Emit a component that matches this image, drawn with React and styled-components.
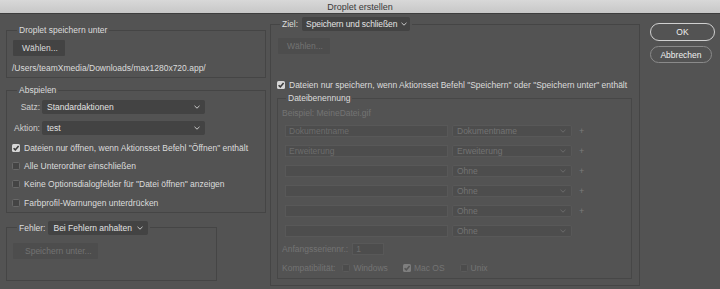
import React from 'react'
import styled, { createGlobalStyle } from 'styled-components'

const GlobalStyle = createGlobalStyle`
  html, body {
    margin: 0;
    padding: 0;
    background: #535353;
  }
  body {
    font-family: "Liberation Sans", Arial, sans-serif;
    font-size: 8.5px;
    color: #dcdcdc;
  }
  #root {
    width: 720px;
    height: 289px;
    overflow: hidden;
  }
`

function Chevron({ dim }) {
  return (
    <svg width="6" height="4" viewBox="0 0 6 4">
      <polyline points="0.5,0.8 3,3.2 5.5,0.8" fill="none" stroke={dim ? '#6a6a6a' : '#c8c8c8'} strokeWidth="1" />
    </svg>
  )
}

function Check({ checked, disabled }) {
  return (
    <Box checked={checked} disabled={disabled}>
      {checked && (
        <svg width="8" height="8" viewBox="0 0 8 8">
          <polyline points="1.6,4.2 3.3,5.9 6.6,2" fill="none" stroke={disabled ? '#555' : '#3a3a3a'} strokeWidth="1.6" />
        </svg>
      )}
    </Box>
  )
}

function CheckRow({ checked, disabled, children }) {
  return (
    <CheckLabel disabled={disabled}>
      <Check checked={checked} disabled={disabled} />
      {children}
    </CheckLabel>
  )
}

function Select({ value, width, disabled, tight }) {
  return (
    <SelectBox width={width} disabled={disabled} tight={tight}>
      <span>{value}</span>
      <Chevron dim={disabled} />
    </SelectBox>
  )
}

const naming = [
  ['Dokumentname', 'Dokumentname', true],
  ['Erweiterung', 'Erweiterung', true],
  ['', 'Ohne', true],
  ['', 'Ohne', true],
  ['', 'Ohne', true],
  ['', 'Ohne', false],
]

function App() {
  return (
    <Window>
      <GlobalStyle />
      <TitleBar>Droplet erstellen</TitleBar>
      <Body>
        <LeftColumn>
          <Group top={11} pad="5px 6px 4px 5px">
            <Legend offset={5}>Droplet speichern unter</Legend>
            <Button>Wählen...</Button>
            <Path>/Users/teamXmedia/Downloads/max1280x720.app/</Path>
          </Group>

          <Group top={7} pad="5px 6px 0 5px">
            <Legend offset={5}>Abspielen</Legend>
            <FormGrid>
              <FieldLabel>Satz:</FieldLabel>
              <Select value="Standardaktionen" width={163} />
              <FieldLabel>Aktion:</FieldLabel>
              <Select value="test" width={163} />
            </FormGrid>
            <CheckList>
              <CheckRow checked>Dateien nur öffnen, wenn Aktionsset Befehl "Öffnen" enthält</CheckRow>
              <CheckRow>Alle Unterordner einschließen</CheckRow>
              <CheckRow>Keine Optionsdialogfelder für "Datei öffnen" anzeigen</CheckRow>
              <CheckRow>Farbprofil-Warnungen unterdrücken</CheckRow>
            </CheckList>
          </Group>

          <Group top={8} pad="8px 6px 21px 5px" width={211}>
            <Legend tall offset={5}>
              <LegendRow gap={3}>
                Fehler:
                <Select value="Bei Fehlern anhalten" width={100} />
              </LegendRow>
            </Legend>
            <Button disabled wide>Speichern unter...</Button>
          </Group>
        </LeftColumn>

        <RightGroup>
          <Legend tall offset={3}>
            <LegendRow gap={4}>
              Ziel:
              <Select value="Speichern und schließen" width={108} tight />
            </LegendRow>
          </Legend>
          <Button disabled>Wählen...</Button>
          <SaveCheck>
            <CheckRow checked>Dateien nur speichern, wenn Aktionsset Befehl "Speichern" oder "Speichern unter" enthält</CheckRow>
          </SaveCheck>

          <InnerGroup>
            <Legend offset={4}>Dateibenennung</Legend>
            <Muted>Beispiel: MeineDatei.gif</Muted>
            <NameRows>
              {naming.map(([text, option, plus], i) => (
                <NameRow key={i}>
                  <TextField width={163}>{text}</TextField>
                  <Select value={option} width={120} disabled />
                  {plus && <Plus>+</Plus>}
                </NameRow>
              ))}
            </NameRows>
            <SerialRow>
              <Muted>Anfangsseriennr.:</Muted>
              <TextField width={32}>1</TextField>
            </SerialRow>
            <CompatRow>
              <Muted>Kompatibilität:</Muted>
              <CompatOptions>
                <CheckRow disabled>Windows</CheckRow>
                <CheckRow disabled checked>Mac OS</CheckRow>
                <CheckRow disabled>Unix</CheckRow>
              </CompatOptions>
            </CompatRow>
          </InnerGroup>
        </RightGroup>

        <Actions>
          <PillButton primary>OK</PillButton>
          <PillButton>Abbrechen</PillButton>
        </Actions>
      </Body>
    </Window>
  )
}

export default App

const Window = styled.div`
  width: 720px;
  height: 289px;
  display: flex;
  flex-direction: column;
  background: #535353;
`

const TitleBar = styled.div`
  height: 13px;
  flex-shrink: 0;
  display: flex;
  align-items: center;
  justify-content: center;
  font-size: 9px;
  color: #3a3a3a;
  background: linear-gradient(#d8d8d8, #c7c7c7);
  border-bottom: 1px solid #3d3d3d;
`

const Body = styled.div`
  display: flex;
  align-items: flex-start;
`

const LeftColumn = styled.div`
  width: 260px;
  margin-left: 6px;
  display: flex;
  flex-direction: column;
`

const Group = styled.fieldset`
  margin: ${p => p.top}px 0 0 0;
  padding: ${p => p.pad};
  width: ${p => (p.width ? `${p.width}px` : 'auto')};
  box-sizing: border-box;
  min-width: 0;
  border: 1px solid #454545;
`

const Legend = styled.legend`
  margin-left: ${p => p.offset}px;
  padding: 0 2px;
  height: ${p => (p.tall ? 14 : 10)}px;
  line-height: 10px;
  display: flex;
  align-items: center;
  color: #dcdcdc;
`

const LegendRow = styled.span`
  display: inline-flex;
  align-items: center;
  gap: ${p => p.gap}px;
`

const Button = styled.div`
  width: ${p => (p.wide ? 85 : 52)}px;
  height: 16px;
  margin-left: 1px;
  box-sizing: border-box;
  padding-left: ${p => (p.wide ? 12 : 9)}px;
  display: flex;
  align-items: center;
  background: ${p => (p.disabled ? '#4d4d4d' : '#434343')};
  color: ${p => (p.disabled ? '#737373' : '#dcdcdc')};
  border-radius: 1px;
`

const Path = styled.div`
  margin-top: 7px;
  line-height: 10px;
`

const FormGrid = styled.div`
  display: grid;
  grid-template-columns: 28px 163px;
  column-gap: 2px;
  row-gap: 7px;
  align-items: center;
`

const FieldLabel = styled.span`
  text-align: right;
  color: #cfcfcf;
`

const SelectBox = styled.div`
  width: ${p => p.width}px;
  height: ${p => (p.disabled ? 12 : 14)}px;
  box-sizing: border-box;
  display: flex;
  align-items: center;
  justify-content: space-between;
  gap: 2px;
  padding: 0 ${p => (p.tight ? 3 : 5)}px 0 ${p => (p.disabled || p.tight ? 4 : 5)}px;
  background: ${p => (p.disabled ? '#4d4d4d' : '#434343')};
  border: ${p => (p.disabled ? '1px solid #585858' : 'none')};
  border-radius: 2px;
  color: ${p => (p.disabled ? '#737373' : '#e2e2e2')};
  white-space: nowrap;
  letter-spacing: ${p => (p.tight ? '-0.1px' : 'normal')};

  svg {
    flex-shrink: 0;
  }
`

const CheckList = styled.div`
  margin-top: 3.5px;
  display: flex;
  flex-direction: column;
`

const CheckLabel = styled.label`
  display: flex;
  align-items: center;
  gap: 4px;
  min-height: 10px;
  color: ${p => (p.disabled ? '#737373' : '#dcdcdc')};
  white-space: nowrap;

  ${CheckList} & {
    height: 18.3px;
  }
`

const Box = styled.span`
  width: 8px;
  height: 8px;
  flex-shrink: 0;
  box-sizing: border-box;
  display: flex;
  align-items: center;
  justify-content: center;
  border-radius: 1.5px;
  background: ${p => (p.checked ? (p.disabled ? '#7e7e7e' : '#d6d6d6') : p.disabled ? '#4c4c4c' : '#444444')};
  border: 1px solid ${p => (p.checked ? 'transparent' : p.disabled ? '#5a5a5a' : '#686868')};

  svg {
    flex-shrink: 0;
  }
`

const RightGroup = styled.fieldset`
  margin: 3px 0 0 4px;
  padding: 7px 7px 6px 6px;
  width: 370px;
  box-sizing: border-box;
  min-width: 0;
  border: 1px solid #454545;
`

const SaveCheck = styled.div`
  margin-top: 25.5px;
  line-height: 10px;
`

const InnerGroup = styled.fieldset`
  margin: 3.5px 0 0 0;
  padding: 5px 4px 5px 4px;
  min-width: 0;
  border: 1px solid #474747;
`

const Muted = styled.span`
  display: block;
  line-height: 10px;
  color: #737373;
  white-space: nowrap;
`

const NameRows = styled.div`
  margin: 7px 0 0 3px;
  display: flex;
  flex-direction: column;
  gap: 8px;
`

const NameRow = styled.div`
  display: flex;
  align-items: center;
  gap: 4px;
`

const TextField = styled.div`
  width: ${p => p.width}px;
  height: 12px;
  box-sizing: border-box;
  padding-left: 3px;
  display: flex;
  align-items: center;
  background: #4d4d4d;
  border: 1px solid #585858;
  color: #6c6c6c;
`

const Plus = styled.span`
  margin-left: 3px;
  color: #7a7a7a;
  font-size: 9px;
`

const SerialRow = styled.div`
  margin-top: 6px;
  display: flex;
  align-items: center;
  gap: 4px;
`

const CompatRow = styled.div`
  margin-top: 8px;
  height: 10px;
  display: flex;
  align-items: center;
  gap: 7px;

  ${CheckLabel} {
    gap: 3px;
  }
`

const CompatOptions = styled.div`
  display: flex;
  align-items: center;
  gap: 15px;
`

const Actions = styled.div`
  margin: 9px 0 0 10px;
  display: flex;
  flex-direction: column;
  gap: 5px;
`

const PillButton = styled.div`
  width: ${p => (p.primary ? 65 : 62)}px;
  height: ${p => (p.primary ? 18 : 17)}px;
  box-sizing: border-box;
  display: flex;
  align-items: center;
  justify-content: center;
  border-radius: 9px;
  border: ${p => (p.primary ? '1.5px solid #d0d0d0' : '1px solid #8a8a8a')};
  color: #f0f0f0;
`
